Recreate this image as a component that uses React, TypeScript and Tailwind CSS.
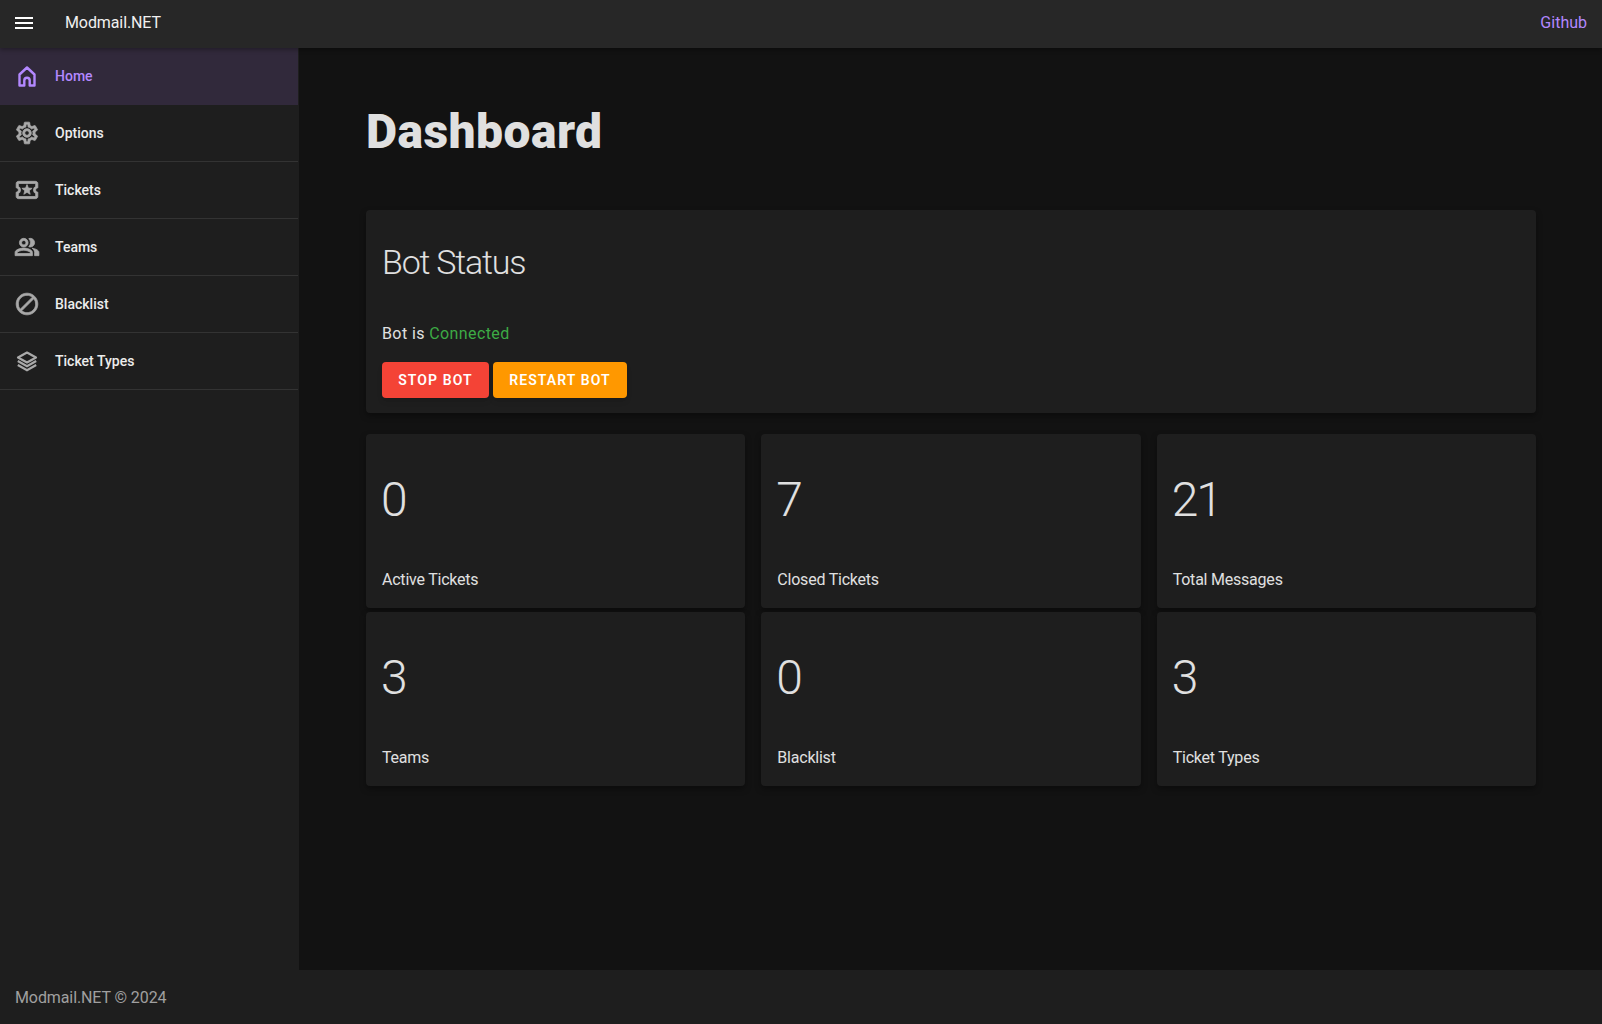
import React from 'react';
import { MdBlock, MdMenu, MdOutlineLocalActivity, MdOutlinePeopleAlt, MdOutlineSettings } from 'react-icons/md';

const HomeIcon = () => (
  <svg viewBox="0 0 24 24" className="h-6 w-6 translate-x-px fill-none stroke-current" strokeWidth={2.4}>
    <path d="M4.500 21.500V10.500L12 3.500l7.500 7v11h-4.800v-5a2.700 2.700 0 0 0-5.400 0v5z" strokeLinejoin="round" />
  </svg>
);

const StackIcon = () => (
  <svg viewBox="0 0 24 24" className="h-6 w-6 translate-x-px fill-none stroke-current" strokeWidth={2.2}>
    <path d="M12 3.500 21 8.500l-9 5-9-5z" strokeLinejoin="round" />
    <path d="M2.800 12 12 17.200l9.200-5.200M2.800 16 12 21.200l9.200-5.200" />
  </svg>
);

// the md icons carry an empty box path, keep it out of the extra stroke
const iconProps = { size: 26, stroke: 'currentColor', strokeWidth: 0.7, className: '[&_path[fill=none]]:stroke-none' };

const navItems = [
  { label: 'Home', icon: <HomeIcon />, active: true },
  { label: 'Options', icon: <MdOutlineSettings {...iconProps} /> },
  { label: 'Tickets', icon: <MdOutlineLocalActivity {...iconProps} /> },
  { label: 'Teams', icon: <MdOutlinePeopleAlt {...iconProps} /> },
  { label: 'Blacklist', icon: <MdBlock {...iconProps} /> },
  { label: 'Ticket Types', icon: <StackIcon /> },
];

const stats = [
  { value: '0', label: 'Active Tickets' },
  { value: '7', label: 'Closed Tickets' },
  { value: '21', label: 'Total Messages' },
  { value: '3', label: 'Teams' },
  { value: '0', label: 'Blacklist' },
  { value: '3', label: 'Ticket Types' },
];

const cardClass = 'rounded bg-[#1e1e1e] shadow-[0_3px_6px_rgba(0,0,0,0.35)]';

export default function App() {
  return (
    <div className="flex min-h-[1024px] flex-col bg-[#121212] font-['Roboto',sans-serif] text-[#e0e0e0]">
      {/* Header */}
      <header className="z-10 flex h-12 shrink-0 items-center justify-between bg-[#272727] pb-[2px] pl-3 pr-[15px] shadow-[0_2px_4px_rgba(0,0,0,0.3)]">
        <div className="flex items-center">
          <MdMenu size={24} className="text-white" />
          <span className="ml-[29px] text-base tracking-[-0.1px] text-[#f0f0f0]">Modmail.NET</span>
        </div>
        <a className="text-base text-[#b388ff]">Github</a>
      </header>

      <div className="flex flex-1">
        {/* Sidebar */}
        <aside className="w-[299px] shrink-0 bg-[#1e1e1e] pr-px">
          {navItems.map((item) => (
            <div
              key={item.label}
              className={
                item.active
                  ? 'flex h-[57px] items-center border-b border-transparent bg-[#31293b] pl-[15px] text-[#b388ff]'
                  : 'flex h-[57px] items-center border-b border-[#333333] pl-[15px] text-[#a9a9a9]'
              }
            >
              <span className="flex w-10 shrink-0 -translate-x-px items-center">{item.icon}</span>
              <span className={item.active ? 'text-sm font-medium' : 'text-sm font-medium text-[#ececec]'}>
                {item.label}
              </span>
            </div>
          ))}
        </aside>

        {/* Main */}
        <main className="flex-1 pl-[67px] pr-[66px] pt-[52px]">
          <h1 className="text-5xl leading-[64px] font-black tracking-[0.45px]">Dashboard</h1>

          <section className={`mt-[46px] h-[203px] p-4 ${cardClass}`}>
            <h2 className="mt-[15px] text-[34px] leading-[42px] font-light tracking-[-1.2px]">Bot Status</h2>
            <p className="mt-[39px] text-base leading-6 tracking-[0.4px]">
              Bot is <span className="text-[#3dab45]">Connected</span>
            </p>
            <div className="mt-[16px] flex gap-1">
              <button className="h-9 w-[107px] rounded bg-[#f44336] text-sm font-semibold tracking-[1.1px] text-white shadow-md">
                STOP BOT
              </button>
              <button className="h-9 w-[134px] rounded bg-[#ff9800] text-sm font-semibold tracking-[1.1px] text-white shadow-md">
                RESTART BOT
              </button>
            </div>
          </section>

          <div className="mt-[21px] grid grid-cols-3 gap-x-4 gap-y-1">
            {stats.map((stat) => (
              <div key={stat.label} className={`flex h-[174px] flex-col p-4 ${cardClass}`}>
                <span className="mt-[18px] -ml-px text-5xl leading-[64px] font-light tracking-[-2px]">{stat.value}</span>
                <span className="mt-auto text-base leading-6 tracking-[-0.22px]">{stat.label}</span>
              </div>
            ))}
          </div>
        </main>
      </div>

      {/* Footer */}
      <footer className="flex h-[54px] shrink-0 items-center bg-[#1e1e1e] pl-[15px] pt-[2px] text-base tracking-[-0.1px] text-[#a0a0a0]">
        Modmail.NET © 2024
      </footer>
    </div>
  );
}
